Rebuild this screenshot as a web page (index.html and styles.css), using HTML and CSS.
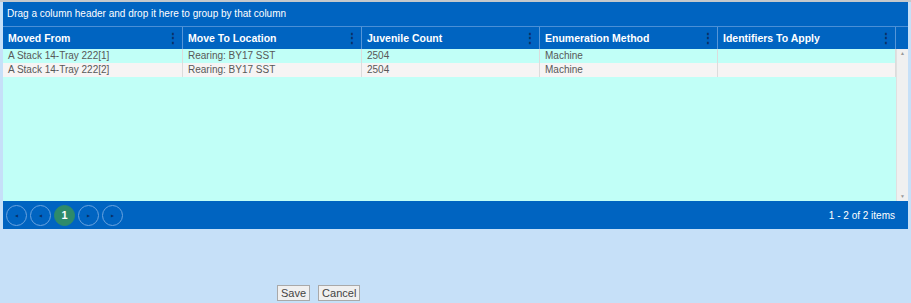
FILE: index.html
```html
<!DOCTYPE html>
<html lang="en">
<head>
    <meta charset="UTF-8">
    <title>Move Juveniles</title>
    <link rel="stylesheet" href="styles.css">
</head>
<body>
<div class="page">
    <div class="grid">
        <div class="group-bar">Drag a column header and drop it here to group by that column</div>
        <div class="head">
            <div class="th">Moved From<span class="menu">&#8942;</span></div>
            <div class="th">Move To Location<span class="menu">&#8942;</span></div>
            <div class="th">Juvenile Count<span class="menu">&#8942;</span></div>
            <div class="th">Enumeration Method<span class="menu">&#8942;</span></div>
            <div class="th">Identifiers To Apply<span class="menu">&#8942;</span></div>
            <div class="th-gap"></div>
        </div>
        <div class="body">
            <div class="rows">
                <div class="row">
                    <div class="td">A Stack 14-Tray 222[1]</div>
                    <div class="td">Rearing: BY17 SST</div>
                    <div class="td">2504</div>
                    <div class="td">Machine</div>
                    <div class="td"></div>
                </div>
                <div class="row alt">
                    <div class="td">A Stack 14-Tray 222[2]</div>
                    <div class="td">Rearing: BY17 SST</div>
                    <div class="td">2504</div>
                    <div class="td">Machine</div>
                    <div class="td"></div>
                </div>
            </div>
            <div class="scroll">
                <span class="arrow">&#9650;</span>
                <span class="arrow">&#9660;</span>
            </div>
        </div>
        <div class="pager">
            <div class="pages">
                <span class="pbtn">&#9664;</span>
                <span class="pbtn">&#9664;</span>
                <span class="pbtn current">1</span>
                <span class="pbtn">&#9654;</span>
                <span class="pbtn">&#9654;</span>
            </div>
            <span class="info">1 - 2 of 2 items</span>
        </div>
    </div>
    <div class="actions">
        <button class="btn" type="button">Save</button>
        <button class="btn" type="button">Cancel</button>
    </div>
</div>
</body>
</html>
```

FILE: styles.css
```css
* {
    margin: 0;
    padding: 0;
    box-sizing: border-box;
}

body {
    background: #c6e0f8;
    font-family: "Liberation Sans", Arial, sans-serif;
    font-size: 10px;
    border-top: 2px solid #c4c8cc;
    height: 303px;
}

.page {
    padding: 0 3px 0 3px;
}

.grid {
    background: #0064c1;
    width: 905px;
}

.group-bar {
    height: 25px;
    line-height: 24px;
    color: #fff;
    padding-left: 4px;
    border-bottom: 1px solid #4a8fd6;
}

.head {
    display: grid;
    grid-template-columns: 180px 179px 178px 178px 178px 12px;
    height: 22px;
}

.th {
    position: relative;
    color: #fff;
    font-weight: bold;
    font-size: 10.5px;
    line-height: 22px;
    padding-left: 5px;
    border-right: 1px solid #5596d8;
}

.menu {
    position: absolute;
    right: 3px;
    top: 0;
    color: #0a2f66;
    font-weight: bold;
    font-size: 12px;
}

.body {
    display: flex;
    height: 152px;
}

.rows {
    flex: 1;
    background: #c1fff7;
}

.row {
    display: grid;
    grid-template-columns: 180px 179px 178px 178px 178px;
    height: 14px;
    line-height: 14px;
    color: #585858;
}

.row.alt {
    background: #f6f4f4;
}

.td {
    padding-left: 5px;
    border-right: 1px solid #dcdcdc;
}

.scroll {
    width: 12px;
    background: #f0f0f0;
    border-left: 1px solid #e0e0e0;
    display: flex;
    flex-direction: column;
    justify-content: space-between;
    align-items: center;
}

.arrow {
    font-size: 5px;
    color: #999;
    line-height: 9px;
}

.pager {
    height: 28px;
    display: flex;
    align-items: center;
    justify-content: space-between;
    padding: 0 13px 0 3px;
    color: #fff;
}

.pages {
    display: flex;
    gap: 3px;
}

.pbtn {
    width: 21px;
    height: 21px;
    border: 1px solid #6aa3df;
    border-radius: 50%;
    display: flex;
    align-items: center;
    justify-content: center;
    font-size: 4px;
    color: #0a2f66;
}

.pbtn.current {
    background: #2e8b6a;
    border-color: #2e8b6a;
    color: #fff;
    font-size: 11px;
    font-weight: bold;
}

.info {
    font-size: 10px;
}

.actions {
    padding: 56px 0 0 274px;
    display: flex;
    gap: 8px;
}

.btn {
    font-family: "Liberation Sans", Arial, sans-serif;
    font-size: 11px;
    color: #444;
    background: #f0f0f0;
    border: 1px solid #a9a9a9;
    padding: 1px 3px;
    height: 16px;
}
```
